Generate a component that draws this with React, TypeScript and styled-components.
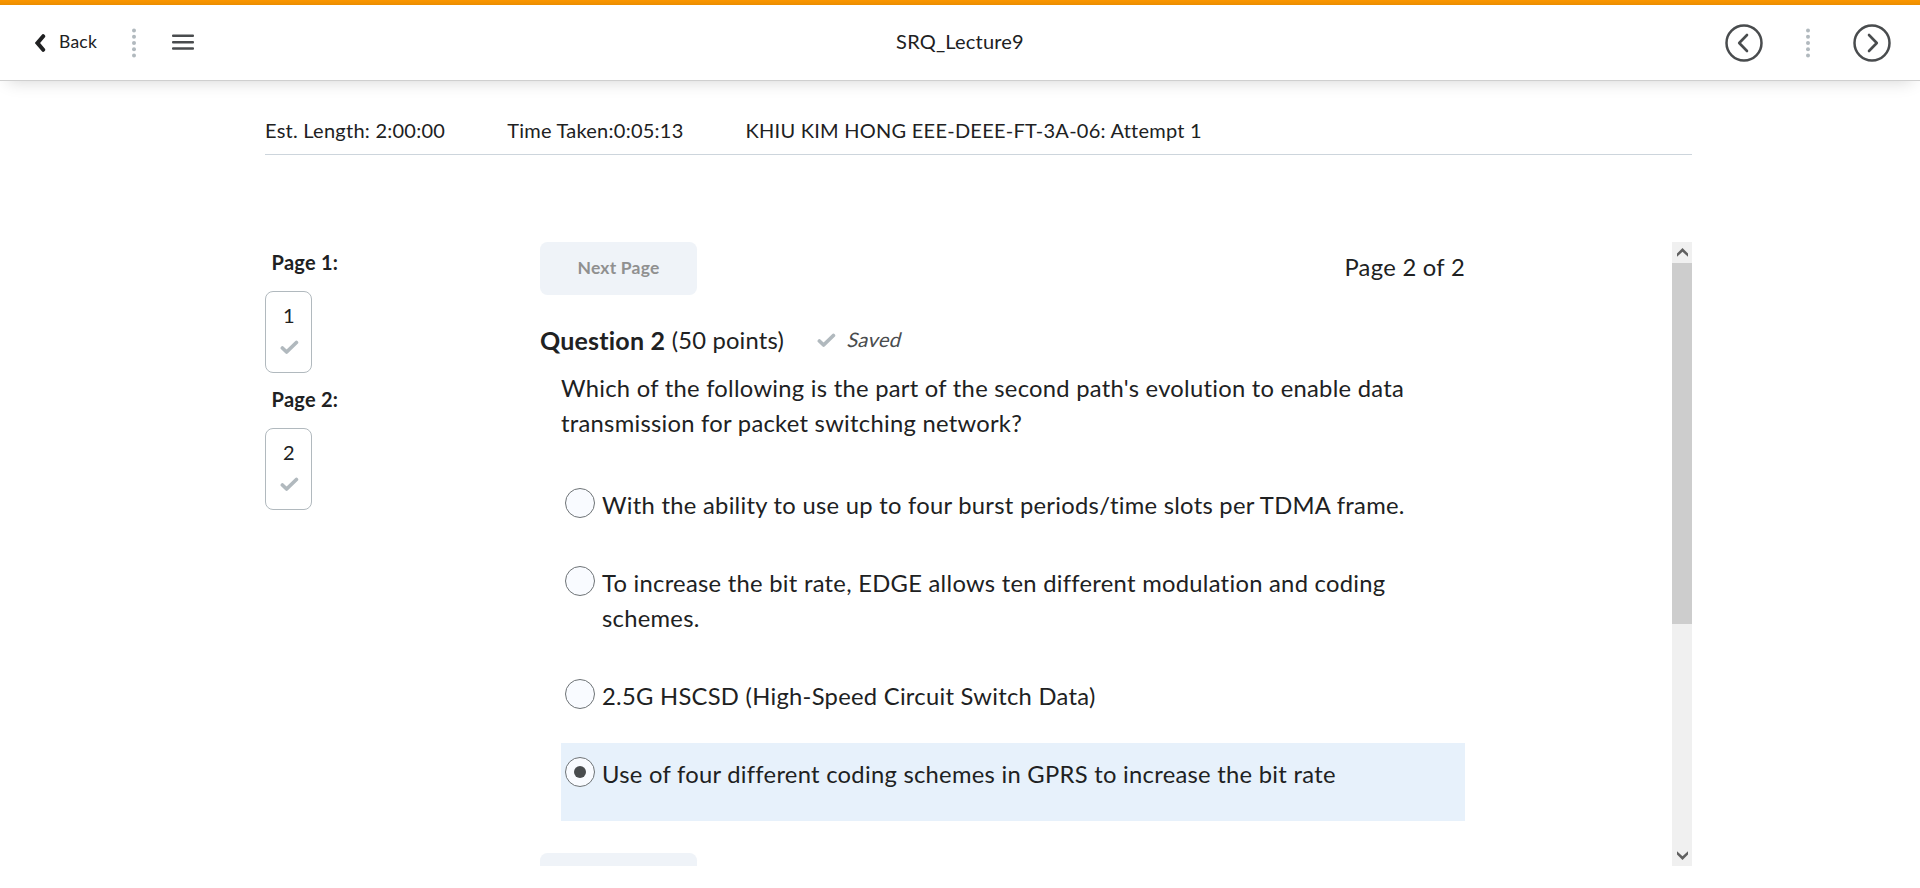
import React from 'react';
import styled, { createGlobalStyle } from 'styled-components';

const GlobalStyle = createGlobalStyle`
  * { box-sizing: border-box; }
  body {
    margin: 0;
    background: #fff;
    color: #202122;
    font-family: Lato, "Liberation Sans", sans-serif;
    font-size: 20px;
    font-variant-ligatures: none;
    overflow: hidden;
  }
  button { font: inherit; letter-spacing: inherit; color: inherit; border: 0; background: none; padding: 0; }
  h1, h2, p { margin: 0; font-weight: 400; font-size: inherit; }
`;

const Page = styled.div`
  height: 888px;
  display: flex;
  flex-direction: column;
  letter-spacing: 0.25px;
`;

const Band = styled.div`
  height: 5px;
  flex: none;
  background: linear-gradient(#fa9600, #ec8e00);
`;

const Header = styled.header`
  height: 76px;
  flex: none;
  display: grid;
  grid-template-columns: 1fr auto 1fr;
  align-items: center;
  padding: 0 29px 0 35px;
  border-bottom: 1px solid #cfcfcf;
  box-shadow: 0 8px 16px -8px rgba(0, 0, 0, 0.18);
`;

const HeaderSide = styled.div<{ $end?: boolean }>`
  display: flex;
  align-items: center;
  justify-content: ${p => (p.$end ? 'flex-end' : 'flex-start')};
`;

const BackButton = styled.button`
  display: flex;
  align-items: center;
  gap: 13px;
  font-size: 17.5px;
  line-height: 24px;
  span { padding-bottom: 2px; }
`;

const Title = styled.h1`
  font-size: 20px;
  line-height: 24px;
  padding: 0 6px 3px 0;
  letter-spacing: 0.2px;
`;

const IconButton = styled.button`
  display: flex;
`;

const Dots = styled.svg<{ $left: number; $right: number }>`
  margin: 0 ${p => p.$right}px 0 ${p => p.$left}px;
`;

const Content = styled.div`
  width: 1427px;
  margin-left: 265px;
`;

const InfoBar = styled.div`
  height: 74px;
  display: flex;
  align-items: flex-end;
  gap: 62px;
  padding-bottom: 12px;
  border-bottom: 1px solid #cdd5dc;
  line-height: 24px;
`;

const Body = styled.div`
  display: flex;
  height: 624px;
  margin-top: 87px;
`;

const Sidebar = styled.nav`
  width: 275px;
  flex: none;
  padding-top: 5px;
`;

const PageLabel = styled.h2`
  font-weight: 700;
  line-height: 30px;
  padding-left: 6.6px;
`;

const PageBlock = styled.div`
  height: 137px;
`;

const QuestionTile = styled.div`
  width: 47px;
  height: 82px;
  margin-top: 14px;
  border: 1px solid #b1b9be;
  border-radius: 8px;
  display: flex;
  flex-direction: column;
  align-items: center;
  padding: 11px 0 0 1px;
  line-height: 24px;
  svg { margin: 13px 0 0; }
`;

const Scroller = styled.div`
  flex: 1;
  display: flex;
  overflow: hidden;
`;

const Quiz = styled.main`
  width: 925px;
  height: 624px;
  margin-right: auto;
  overflow: hidden;
`;

const QuizTop = styled.div`
  display: flex;
  justify-content: space-between;
  height: 53px;
  font-size: 23.75px;
  line-height: 51px;
  letter-spacing: 0.3px;
`;

const PageButton = styled.button`
  width: 157px;
  height: 53px;
  border-radius: 7.5px;
  background: #eff3f8;
  color: #909090;
  font-size: 17.5px;
  font-weight: 700;
  line-height: 51px;
  padding-bottom: 2px;
  letter-spacing: 0.2px;
`;

const QuestionHead = styled.div`
  display: flex;
  align-items: center;
  height: 36px;
  margin-top: 27px;
  font-size: 23.75px;
  line-height: 36px;
  letter-spacing: 0.2px;
  b { margin-right: 6.5px; font-size: 25px; }
`;

const Saved = styled.span`
  display: flex;
  align-items: center;
  gap: 12px;
  margin-left: 33px;
  color: #494c4e;
  font-size: 20px;
  letter-spacing: 0.3px;
`;

const Slanted = styled.span`
  display: inline-block;
  transform: skewX(-14deg);
  padding-bottom: 2px;
`;

const Prompt = styled.p`
  margin: 13px 0 0 21px;
  font-size: 23.75px;
  line-height: 35px;
  letter-spacing: 0.27px;
`;

const Options = styled.div`
  margin: 33px 0 32px 21px;
`;

const Option = styled.label<{ $selected?: boolean }>`
  display: flex;
  align-items: flex-start;
  padding: 14px 20px 29px 4px;
  background: ${p => (p.$selected ? '#e7f1fb' : 'transparent')};
  font-size: 23.75px;
  line-height: 35px;
  letter-spacing: 0.28px;
`;

const Radio = styled.span`
  flex: none;
  width: 30px;
  height: 30px;
  margin-right: 7px;
  border: 1px solid #6e7376;
  border-radius: 50%;
  background: #f9fbff;
  display: flex;
  align-items: center;
  justify-content: center;
`;

const RadioDot = styled.span`
  width: 12px;
  height: 12px;
  border-radius: 50%;
  background: #494c4e;
`;

const Scrollbar = styled.div`
  width: 20px;
  background: #f0f0f0;
  display: flex;
  flex-direction: column;
`;

const Arrow = styled.div`
  height: 21px;
  display: flex;
  align-items: center;
  justify-content: center;
  padding-left: 1px;
`;

const Thumb = styled.div`
  height: 361px;
  background: #cdcdcd;
  margin-bottom: auto;
`;

const Separator = ({ left, right }: { left: number; right: number }) => (
  <Dots $left={left} $right={right} width="4" height="30" viewBox="0 0 4 30" fill="#b1b9be">
    {[2.5, 8.75, 15, 21.25, 27.5].map(y => <circle key={y} cx="2" cy={y} r="2" />)}
  </Dots>
);

const Check = () => (
  <svg width="19" height="15" viewBox="0 0 19 15" fill="none" stroke="#b1b9be" strokeWidth="3.7" strokeLinecap="round" strokeLinejoin="round">
    <path d="M2.4 8L6.6 12L16.4 2.5" />
  </svg>
);

const Circled = ({ d }: { d: string }) => (
  <svg width="38" height="38" viewBox="0 0 38 38" fill="none" stroke="#494c4e" strokeWidth="2.5">
    <circle cx="19" cy="19" r="17.5" />
    <path d={d} strokeLinecap="round" strokeLinejoin="round" strokeWidth="2.6" />
  </svg>
);

const options = [
  'With the ability to use up to four burst periods/time slots per TDMA frame.',
  'To increase the bit rate, EDGE allows ten different modulation and coding schemes.',
  '2.5G HSCSD (High-Speed Circuit Switch Data)',
  'Use of four different coding schemes in GPRS to increase the bit rate',
];
const selected = 3;

export default function App() {
  return (
    <Page>
      <GlobalStyle />
      <Band />
      <Header>
        <HeaderSide>
          <BackButton>
            <svg width="11" height="18" viewBox="0 0 11 18" fill="none" stroke="#202122" strokeWidth="4" strokeLinecap="round" strokeLinejoin="miter">
              <path d="M8.2 2.2L2.5 9L8.2 15.8" />
            </svg>
            <span>Back</span>
          </BackButton>
          <Separator left={35} right={36} />
          <IconButton aria-label="Menu">
            <svg width="22" height="17" viewBox="0 0 22 17" fill="#494c4e">
              <rect y="0.5" width="22" height="2.5" rx="1" />
              <rect y="6.9" width="22" height="2.5" rx="1" />
              <rect y="13.2" width="22" height="2.5" rx="1" />
            </svg>
          </IconButton>
        </HeaderSide>
        <Title>SRQ_Lecture9</Title>
        <HeaderSide $end>
          <IconButton aria-label="Previous"><Circled d="M22 11L14.2 19L22 27" /></IconButton>
          <Separator left={43} right={43} />
          <IconButton aria-label="Next"><Circled d="M16 11L23.8 19L16 27" /></IconButton>
        </HeaderSide>
      </Header>
      <Content>
        <InfoBar>
          <span>Est. Length: 2:00:00</span>
          <span>Time Taken:0:05:13</span>
          <span>KHIU KIM HONG EEE-DEEE-FT-3A-06: Attempt 1</span>
        </InfoBar>
        <Body>
          <Sidebar>
            {[1, 2].map(n => (
              <PageBlock key={n}>
                <PageLabel>Page {n}:</PageLabel>
                <QuestionTile>
                  {n}
                  <Check />
                </QuestionTile>
              </PageBlock>
            ))}
          </Sidebar>
          <Scroller>
            <Quiz>
              <QuizTop>
                <PageButton disabled>Next Page</PageButton>
                <span>Page 2 of 2</span>
              </QuizTop>
              <QuestionHead>
                <b>Question 2</b>
                <span>(50 points)</span>
                <Saved><Check /><Slanted>Saved</Slanted></Saved>
              </QuestionHead>
              <Prompt>
                Which of the following is the part of the second path's evolution to enable data transmission for packet switching network?
              </Prompt>
              <Options>
                {options.map((text, i) => (
                  <Option key={text} $selected={i === selected}>
                    <Radio>{i === selected && <RadioDot />}</Radio>
                    <span>{text}</span>
                  </Option>
                ))}
              </Options>
              <PageButton disabled aria-label="Next Page" />
            </Quiz>
            <Scrollbar>
              <Arrow>
                <svg width="11" height="9" viewBox="0 0 11 9" fill="#606060"><path d="M5.5 0L11 5.5V8.8L5.5 3.8L0 8.8V5.5Z" /></svg>
              </Arrow>
              <Thumb />
              <Arrow>
                <svg width="11" height="9" viewBox="0 0 11 9" fill="#606060"><path d="M5.5 9L11 3.5V0.2L5.5 5.2L0 0.2V3.5Z" /></svg>
              </Arrow>
            </Scrollbar>
          </Scroller>
        </Body>
      </Content>
    </Page>
  );
}
